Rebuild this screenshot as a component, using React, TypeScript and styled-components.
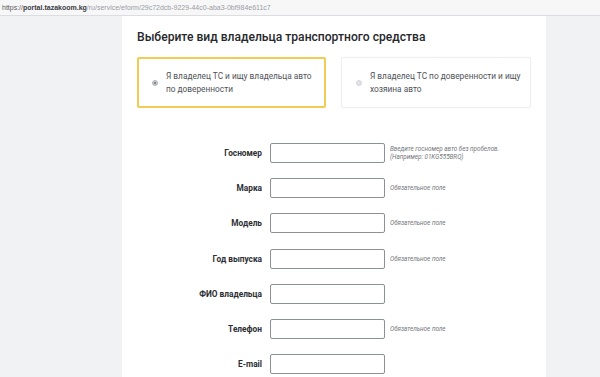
import styled, { createGlobalStyle } from 'styled-components';

const GlobalStyle = createGlobalStyle`
  html, body {
    margin: 0;
    padding: 0;
    background: #f1f2f4;
    font-family: Roboto, 'Liberation Sans', Arial, sans-serif;
    overflow: hidden;
  }
  * { box-sizing: border-box; }
`;

const AddressBar = styled.div`
  height: 16px;
  padding: 0 2px;
  display: flex;
  align-items: center;
  background: #f7f7f8;
  border-bottom: 1px solid #dcdde0;
  font-family: 'Liberation Sans', Arial, sans-serif;
  font-size: 7px;
  color: #9a9ca3;
  white-space: nowrap;
`;

const Domain = styled.span`
  color: #3a3c42;
  font-weight: 700;
`;

const Scheme = styled.span`
  color: #55575c;
`;

const Panel = styled.main`
  margin-left: 122px;
  width: 424px;
  min-height: 361px;
  background: #ffffff;
  padding: 13px 14px 0 15px;
`;

const Heading = styled.h2`
  margin: 0 0 12px;
  font-size: 12.1px;
  line-height: 16px;
  font-weight: 500;
  color: #26282c;
`;

const Choices = styled.div`
  display: grid;
  grid-template-columns: 189px 190px;
  gap: 15px;
`;

const Choice = styled.label<{ $active?: boolean }>`
  height: 51px;
  display: flex;
  align-items: center;
  gap: 8px;
  padding: 0 6px 0 ${(p) => (p.$active ? '13px' : '14px')};
  border: ${(p) => (p.$active ? '2px solid #f1cc55' : '1px solid #eceef1')};
  border-radius: 2px;
  background: #fff;
  box-shadow: ${(p) => (p.$active ? 'none' : '0 0 2px rgba(0,0,0,0.04)')};
`;

const Radio = styled.span<{ $checked?: boolean }>`
  flex: none;
  width: 6px;
  height: 6px;
  border-radius: 50%;
  background: ${(p) => (p.$checked ? '#c9cbcf' : '#e3e4e7')};
  border: 1px solid ${(p) => (p.$checked ? '#b3b5ba' : '#d5d6da')};
  position: relative;

  &::after {
    content: '';
    display: ${(p) => (p.$checked ? 'block' : 'none')};
    position: absolute;
    left: 1px;
    top: 1px;
    width: 2px;
    height: 2px;
    border-radius: 50%;
    background: #6f7176;
  }
`;

const ChoiceText = styled.span`
  font-size: 8.3px;
  line-height: 12.5px;
  color: #4f5258;
  white-space: nowrap;
`;

const Form = styled.div`
  margin-top: 35px;
  display: flex;
  flex-direction: column;
  gap: 15.2px;
`;

const Row = styled.div`
  display: grid;
  grid-template-columns: 125px 115px 1fr;
  column-gap: 8px;
  align-items: center;
`;

const Label = styled.span`
  text-align: right;
  font-size: 8.3px;
  font-weight: 700;
  color: #2c2e33;
`;

const Input = styled.input`
  width: 115px;
  height: 20px;
  border: 1px solid #8d9096;
  border-radius: 2px;
  background: #fff;
  margin: 0;
  padding: 0 4px;
  outline: none;
`;

const Hint = styled.span`
  margin-left: -3px;
  font-size: 6.3px;
  line-height: 8px;
  font-style: italic;
  color: #75787d;
`;

const rows = [
  { label: 'Госномер', hint: ['Введите госномер авто без пробелов.', '(Например: 01KG555BRQ)'] },
  { label: 'Марка', hint: ['Обязательное поле'] },
  { label: 'Модель', hint: ['Обязательное поле'] },
  { label: 'Год выпуска', hint: ['Обязательное поле'] },
  { label: 'ФИО владельца', hint: [] },
  { label: 'Телефон', hint: ['Обязательное поле'] },
  { label: 'E-mail', hint: [] },
];

export default function App() {
  return (
    <>
      <GlobalStyle />
      <AddressBar>
        <Scheme>https://</Scheme>
        <Domain>portal.tazakoom.kg</Domain>
        /ru/service/eform/29c72dcb-9229-44c0-aba3-0bf984e611c7
      </AddressBar>
      <Panel>
        <Heading>Выберите вид владельца транспортного средства</Heading>
        <Choices>
          <Choice $active>
            <Radio $checked />
            <ChoiceText>
              Я владелец ТС и ищу владельца авто
              <br />
              по доверенности
            </ChoiceText>
          </Choice>
          <Choice>
            <Radio />
            <ChoiceText>
              Я владелец ТС по доверенности и ищу
              <br />
              хозяина авто
            </ChoiceText>
          </Choice>
        </Choices>
        <Form>
          {rows.map((r) => (
            <Row key={r.label}>
              <Label>{r.label}</Label>
              <Input />
              <Hint>
                {r.hint.map((h, i) => (
                  <span key={i}>
                    {i > 0 && <br />}
                    {h}
                  </span>
                ))}
              </Hint>
            </Row>
          ))}
        </Form>
      </Panel>
    </>
  );
}
